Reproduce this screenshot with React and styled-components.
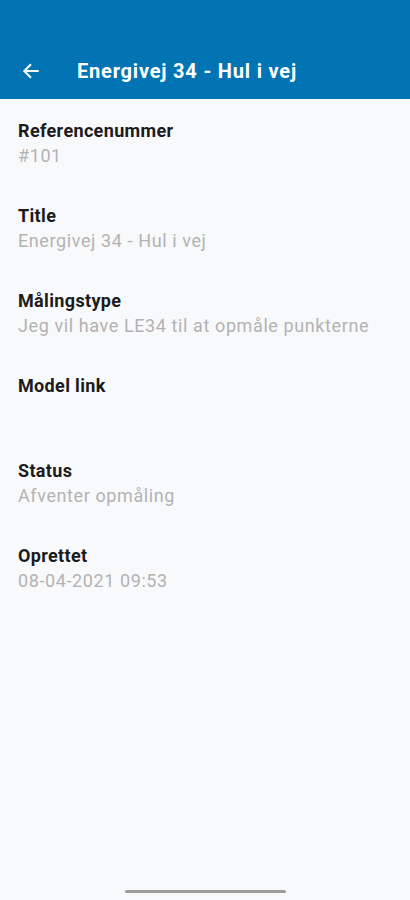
import React from 'react';
import styled, { createGlobalStyle } from 'styled-components';

const GlobalStyle = createGlobalStyle`
  html, body {
    margin: 0;
    padding: 0;
    background: #f8f9fb;
    font-family: Roboto, "Noto Sans", sans-serif;
  }
`;

const Screen = styled.div`
  width: 410px;
  height: 900px;
  display: flex;
  flex-direction: column;
  background: #f8f9fb;
  overflow: hidden;
`;

const Header = styled.header`
  height: 99px;
  flex-shrink: 0;
  background: #0274b3;
  display: flex;
  align-items: flex-end;
  padding: 0 0 16px 20px;
  box-sizing: border-box;
  gap: 35px;
  color: #ffffff;
`;

const BackButton = styled.button`
  width: 22px;
  height: 24px;
  padding: 0;
  border: none;
  background: transparent;
  color: inherit;
  display: flex;
  align-items: center;
  justify-content: center;
`;

const Title = styled.h1`
  margin: 0;
  font-size: 20px;
  line-height: 24px;
  font-weight: 700;
  letter-spacing: 0.8px;
`;

const Details = styled.main`
  flex: 1;
  display: flex;
  flex-direction: column;
  padding: 19px 18px 0;
  gap: 35px;
`;

const Field = styled.div`
  display: flex;
  flex-direction: column;
`;

const Label = styled.div`
  font-size: 18px;
  line-height: 25px;
  font-weight: 700;
  letter-spacing: 0.35px;
  color: #1b1b1b;
`;

const Value = styled.div`
  font-size: 18px;
  line-height: 25px;
  letter-spacing: 0.6px;
  color: #b3b3b3;
  min-height: 25px;
`;

const HomeBar = styled.div`
  display: flex;
  justify-content: center;
  padding-bottom: 7px;

  &::after {
    content: '';
    width: 161px;
    height: 3px;
    border-radius: 2px;
    background: #9c9c9c;
  }
`;

const fields = [
  { label: 'Referencenummer', value: '#101' },
  { label: 'Title', value: 'Energivej 34 - Hul i vej' },
  { label: 'Målingstype', value: 'Jeg vil have LE34 til at opmåle punkterne' },
  { label: 'Model link', value: '' },
  { label: 'Status', value: 'Afventer opmåling' },
  { label: 'Oprettet', value: '08-04-2021 09:53' },
];

const App = () => (
  <Screen>
    <GlobalStyle />
    <Header>
      <BackButton type="button" aria-label="Tilbage">
        <svg width="18" height="18" viewBox="0 0 24 24" fill="none" stroke="currentColor" strokeWidth="2.6" strokeLinecap="square">
          <path d="M21 12H4" />
          <path d="M11 4l-8 8 8 8" />
        </svg>
      </BackButton>
      <Title>Energivej 34 - Hul i vej</Title>
    </Header>
    <Details>
      {fields.map((field) => (
        <Field key={field.label}>
          <Label>{field.label}</Label>
          <Value>{field.value}</Value>
        </Field>
      ))}
    </Details>
    <HomeBar />
  </Screen>
);

export default App;
